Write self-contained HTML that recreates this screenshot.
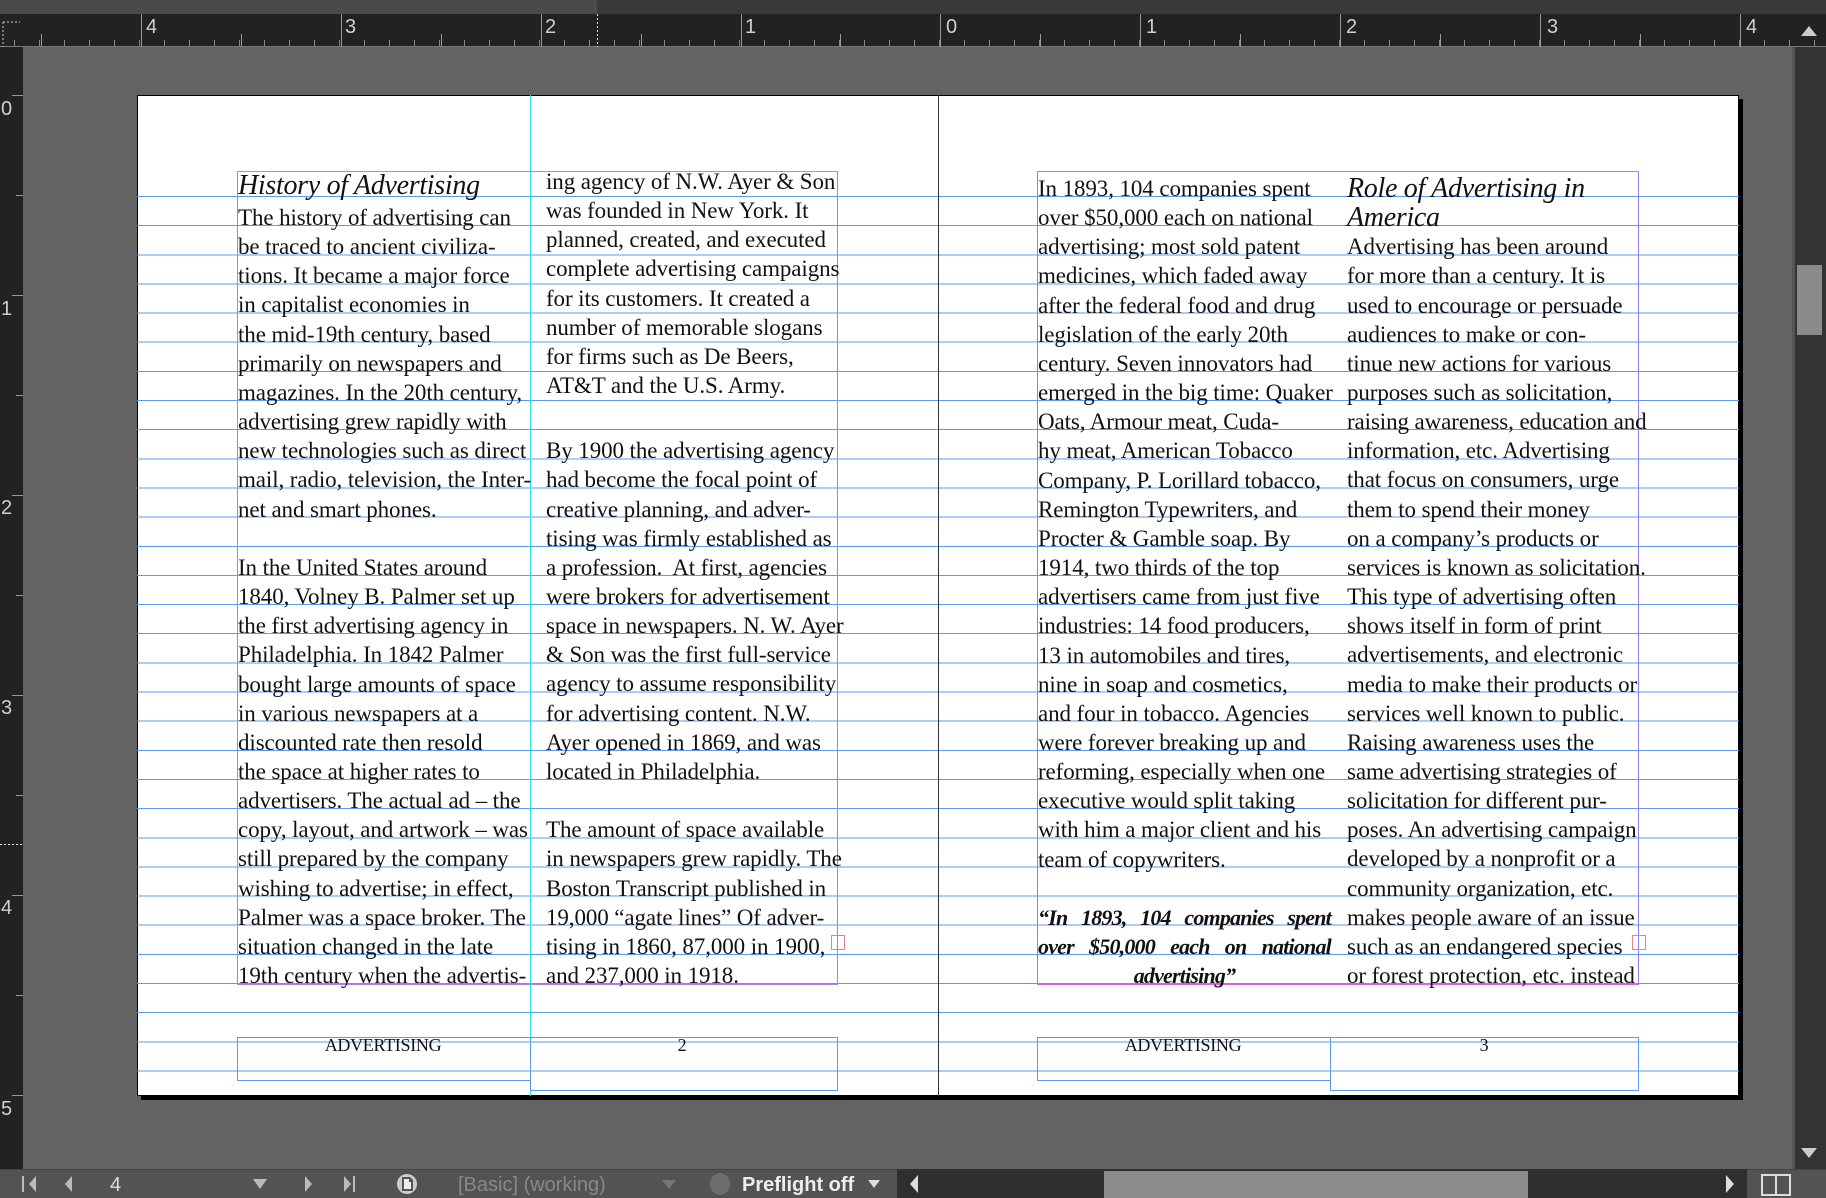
<!DOCTYPE html>
<html><head><meta charset="utf-8">
<style>
*{margin:0;padding:0;box-sizing:border-box}
body{width:1826px;height:1198px;overflow:hidden;background:#636363;position:relative;font-family:"Liberation Serif",serif;}
.abs{position:absolute}
.topbar{left:0;top:0;width:1826px;height:14px;background:#3a3a3a}
.topbar2{left:0;top:0;width:597px;height:14px;background:#4a4a4a}
.hruler{left:0;top:14px;width:1826px;height:33px;background:#222;border-bottom:1px solid #777}
.vruler{left:0;top:47px;width:23px;height:1122px;background:#222}
.rl{color:#cfcfcf;font-family:"Liberation Sans",sans-serif;font-size:20px;position:absolute}
.page{left:137px;top:95px;width:1602px;height:1001px;background:#fff;border:1px solid #000;box-shadow:4px 4px 0 #000}
.grid{left:137px;top:196px;width:1602px;height:880px;background:repeating-linear-gradient(to bottom,#5b9af0 0,#5b9af0 1px,transparent 1px,transparent 29.15px)}
.col{position:absolute;font-size:23px;line-height:29.15px;color:#111;white-space:nowrap;letter-spacing:-0.1px}
.h{font-style:italic;font-size:28px;letter-spacing:-0.3px}
.ft{position:absolute;font-size:18px;color:#111;transform:translateX(-50%);top:1035px;letter-spacing:-0.3px}
.box{position:absolute;border:1px solid #5b9af0}
.bb{color:#aaa;font-family:"Liberation Sans",sans-serif;font-size:20px;position:absolute;top:1174px}
</style></head><body>
<div class="abs topbar"></div><div class="abs topbar2"></div>
<div class="abs hruler" style="background:#222 repeating-linear-gradient(to right,transparent 0,transparent 14px,#888 14px,#888 15px,transparent 15px,transparent 25px) 0 26px/100% 7px no-repeat"></div>
<svg class="abs" style="left:0;top:14px" width="1795" height="33">
<g stroke="#999" stroke-width="1">
<line x1="141.5" y1="0" x2="141.5" y2="33"/><line x1="341.5" y1="0" x2="341.5" y2="33"/><line x1="541.5" y1="0" x2="541.5" y2="33"/><line x1="741.5" y1="0" x2="741.5" y2="33"/><line x1="940.5" y1="0" x2="940.5" y2="33"/><line x1="1140.5" y1="0" x2="1140.5" y2="33"/><line x1="1340.5" y1="0" x2="1340.5" y2="33"/><line x1="1540.5" y1="0" x2="1540.5" y2="33"/><line x1="1740.5" y1="0" x2="1740.5" y2="33"/>
<line x1="41.5" y1="20" x2="41.5" y2="33"/><line x1="241.5" y1="20" x2="241.5" y2="33"/><line x1="441.5" y1="20" x2="441.5" y2="33"/><line x1="641.5" y1="20" x2="641.5" y2="33"/><line x1="840.5" y1="20" x2="840.5" y2="33"/><line x1="1040.5" y1="20" x2="1040.5" y2="33"/><line x1="1240.5" y1="20" x2="1240.5" y2="33"/><line x1="1440.5" y1="20" x2="1440.5" y2="33"/><line x1="1640.5" y1="20" x2="1640.5" y2="33"/>
</g>
<line x1="597.5" y1="0" x2="597.5" y2="33" stroke="#ddd" stroke-dasharray="2,2"/>
<path d="M3 8H20M3 8V33" stroke="#ccc" stroke-dasharray="2,2" fill="none"/>
</svg>
<div class="rl" style="left:146px;top:16px">4</div><div class="rl" style="left:345px;top:16px">3</div><div class="rl" style="left:545px;top:16px">2</div><div class="rl" style="left:745px;top:16px">1</div><div class="rl" style="left:946px;top:16px">0</div><div class="rl" style="left:1146px;top:16px">1</div><div class="rl" style="left:1346px;top:16px">2</div><div class="rl" style="left:1547px;top:16px">3</div><div class="rl" style="left:1746px;top:16px">4</div>
<div class="abs vruler"></div>
<svg class="abs" style="left:0;top:47px" width="23" height="1122"><g stroke="#999">
<line x1="12" y1="48.5" x2="23" y2="48.5"/><line x1="12" y1="248.5" x2="23" y2="248.5"/><line x1="12" y1="448.5" x2="23" y2="448.5"/><line x1="12" y1="648.5" x2="23" y2="648.5"/><line x1="12" y1="848.5" x2="23" y2="848.5"/><line x1="12" y1="1048.5" x2="23" y2="1048.5"/>
<line x1="16" y1="148.5" x2="23" y2="148.5"/><line x1="16" y1="348.5" x2="23" y2="348.5"/><line x1="16" y1="548.5" x2="23" y2="548.5"/><line x1="16" y1="748.5" x2="23" y2="748.5"/><line x1="16" y1="948.5" x2="23" y2="948.5"/>
</g><line x1="0" y1="797.5" x2="23" y2="797.5" stroke="#ddd" stroke-dasharray="2,2"/></svg>
<div class="rl" style="left:1px;top:98px">0</div><div class="rl" style="left:1px;top:298px">1</div><div class="rl" style="left:1px;top:497px">2</div><div class="rl" style="left:1px;top:697px">3</div><div class="rl" style="left:1px;top:897px">4</div><div class="rl" style="left:1px;top:1098px">5</div>

<div class="abs page"></div>
<div class="abs grid"></div>
<div class="abs" style="left:237px;top:171px;width:601px;height:814px;border:1px solid #b07ce8;border-top-color:#e070e0"></div>
<div class="abs" style="left:1037px;top:171px;width:602px;height:814px;border:1px solid #8f7bea;border-top-color:#c070e8;border-bottom-color:#e060f0"></div>
<div class="abs" style="left:530px;top:95px;width:1px;height:1001px;background:#2ee0f0"></div>
<div class="abs" style="left:938px;top:95px;width:1px;height:1001px;background:#333"></div>
<div class="abs" style="left:831px;top:935px;width:14px;height:15px;border:1px solid #f08080"></div>
<div class="abs" style="left:1632px;top:935px;width:14px;height:15px;border:1px solid #f08080"></div>

<div class="box" style="left:237px;top:1037px;width:294px;height:44px"></div>
<div class="box" style="left:530px;top:1037px;width:308px;height:54px"></div>
<div class="box" style="left:1037px;top:1037px;width:294px;height:44px"></div>
<div class="box" style="left:1330px;top:1037px;width:309px;height:54px"></div>
<div class="ft" style="left:383px">ADVERTISING</div><div class="ft" style="left:682px">2</div>
<div class="ft" style="left:1183px">ADVERTISING</div><div class="ft" style="left:1484px">3</div>

<div class="col h" style="left:238px;top:171px">History of Advertising</div>
<div class="col" style="left:238px;top:203px">The history of advertising can<br>be traced to ancient civiliza-<br>tions. It became a major force<br>in capitalist economies in<br>the mid-19th century, based<br>primarily on newspapers and<br>magazines. In the 20th century,<br>advertising grew rapidly with<br>new technologies such as direct<br>mail, radio, television, the Inter-<br>net and smart phones.<br>&nbsp;<br>In the United States around<br>1840, Volney B. Palmer set up<br>the first advertising agency in<br>Philadelphia. In 1842 Palmer<br>bought large amounts of space<br>in various newspapers at a<br>discounted rate then resold<br>the space at higher rates to<br>advertisers. The actual ad – the<br>copy, layout, and artwork – was<br>still prepared by the company<br>wishing to advertise; in effect,<br>Palmer was a space broker. The<br>situation changed in the late<br>19th century when the advertis-</div>
<div class="col" style="left:546px;top:167px">ing agency of N.W. Ayer &amp; Son<br>was founded in New York. It<br>planned, created, and executed<br>complete advertising campaigns<br>for its customers. It created a<br>number of memorable slogans<br>for firms such as De Beers,<br>AT&amp;T and the U.S. Army.</div>
<div class="col" style="left:546px;top:436.2px">By 1900 the advertising agency<br>had become the focal point of<br>creative planning, and adver-<br>tising was firmly established as<br>a profession.&nbsp; At first, agencies<br>were brokers for advertisement<br>space in newspapers. N. W. Ayer<br>&amp; Son was the first full-service<br>agency to assume responsibility<br>for advertising content. N.W.<br>Ayer opened in 1869, and was<br>located in Philadelphia.<br>&nbsp;<br>The amount of space available<br>in newspapers grew rapidly. The<br>Boston Transcript published in<br>19,000 “agate lines” Of adver-<br>tising in 1860, 87,000 in 1900,<br>and 237,000 in 1918.</div>

<div class="col" style="left:1038px;top:174px">In 1893, 104 companies spent<br>over $50,000 each on national<br>advertising; most sold patent<br>medicines, which faded away<br>after the federal food and drug<br>legislation of the early 20th<br>century. Seven innovators had<br>emerged in the big time: Quaker<br>Oats, Armour meat, Cuda-<br>hy meat, American Tobacco<br>Company, P. Lorillard tobacco,<br>Remington Typewriters, and<br>Procter &amp; Gamble soap. By<br>1914, two thirds of the top<br>advertisers came from just five<br>industries: 14 food producers,<br>13 in automobiles and tires,<br>nine in soap and cosmetics,<br>and four in tobacco. Agencies<br>were forever breaking up and<br>reforming, especially when one<br>executive would split taking<br>with him a major client and his<br>team of copywriters.</div>
<div class="col" style="left:1038px;top:902.8px;width:293px;white-space:normal;font-style:italic;font-weight:bold;font-size:22px;letter-spacing:-0.8px;text-align:justify;text-align-last:justify">“In 1893, 104 companies spent<br>over $50,000 each on national</div>
<div class="col" style="left:1038px;top:961.1px;width:293px;font-style:italic;font-weight:bold;font-size:22px;text-align:center;letter-spacing:-0.8px">advertising”</div>
<div class="col h" style="left:1347px;top:174px;line-height:29.15px">Role of Advertising in<br>America</div>
<div class="col" style="left:1347px;top:232.2px">Advertising has been around<br>for more than a century. It is<br>used to encourage or persuade<br>audiences to make or con-<br>tinue new actions for various<br>purposes such as solicitation,<br>raising awareness, education and<br>information, etc. Advertising<br>that focus on consumers, urge<br>them to spend their money<br>on a company’s products or<br>services is known as solicitation.<br>This type of advertising often<br>shows itself in form of print<br>advertisements, and electronic<br>media to make their products or<br>services well known to public.<br>Raising awareness uses the<br>same advertising strategies of<br>solicitation for different pur-<br>poses. An advertising campaign<br>developed by a nonprofit or a<br>community organization, etc.<br>makes people aware of an issue<br>such as an endangered species<br>or forest protection, etc. instead</div>

<!-- right scrollbar -->
<div class="abs" style="left:1792px;top:47px;width:34px;height:1122px;background:#333;border-left:3px solid #555"></div>
<div class="abs" style="left:1797px;top:265px;width:25px;height:70px;background:#8a8a8a"></div>
<svg class="abs" style="left:1798px;top:24px" width="22" height="14"><path d="M3 12L11 2L19 12Z" fill="#ccc"/></svg>
<svg class="abs" style="left:1798px;top:1146px" width="22" height="14"><path d="M3 2L11 12L19 2Z" fill="#ccc"/></svg>
<!-- bottom bar -->
<div class="abs" style="left:0;top:1169px;width:1826px;height:29px;background:#535353;border-top:1px solid #444"></div>
<div class="abs" style="left:897px;top:1169px;width:850px;height:29px;background:#2f2f2f"></div>
<div class="abs" style="left:1104px;top:1171px;width:424px;height:27px;background:#8c8c8c"></div>
<svg class="abs" style="left:0;top:1169px" width="1826" height="29" fill="#bbb">
<rect x="22" y="7" width="2" height="16"/><path d="M36 7L29 15L36 23Z"/>
<path d="M72 7L65 15L72 23Z"/>
<path d="M253 10H267L260 20Z"/>
<path d="M305 7L312 15L305 23Z"/>
<path d="M344 7L351 15L344 23Z"/><rect x="353" y="7" width="2" height="16"/>
<circle cx="407" cy="15" r="10" fill="#ccc"/><path d="M402 8H410L413 11V22H402Z" fill="#555"/><path d="M404 10H409V13H411V20H404Z" fill="#eee"/>
<path d="M662 11H676L669 20Z" fill="#777"/>
<ellipse cx="720" cy="15" rx="10" ry="11" fill="#6e6e6e"/>
<path d="M868 11H880L874 19Z" fill="#ddd"/>
<path d="M918 6L910 15L918 24Z" fill="#ddd"/>
<path d="M1726 6L1734 15L1726 24Z" fill="#ddd"/>
<rect x="1762" y="6" width="28" height="20" fill="none" stroke="#ddd" stroke-width="2"/><rect x="1775" y="6" width="2" height="20" fill="#ddd"/>
</svg>
<div class="bb" style="left:110px;color:#ddd">4</div>
<div class="bb" style="left:458px;color:#888">[Basic] (working)</div>
<div class="bb" style="left:742px;color:#eee;font-weight:bold">Preflight off</div>
</body></html>
